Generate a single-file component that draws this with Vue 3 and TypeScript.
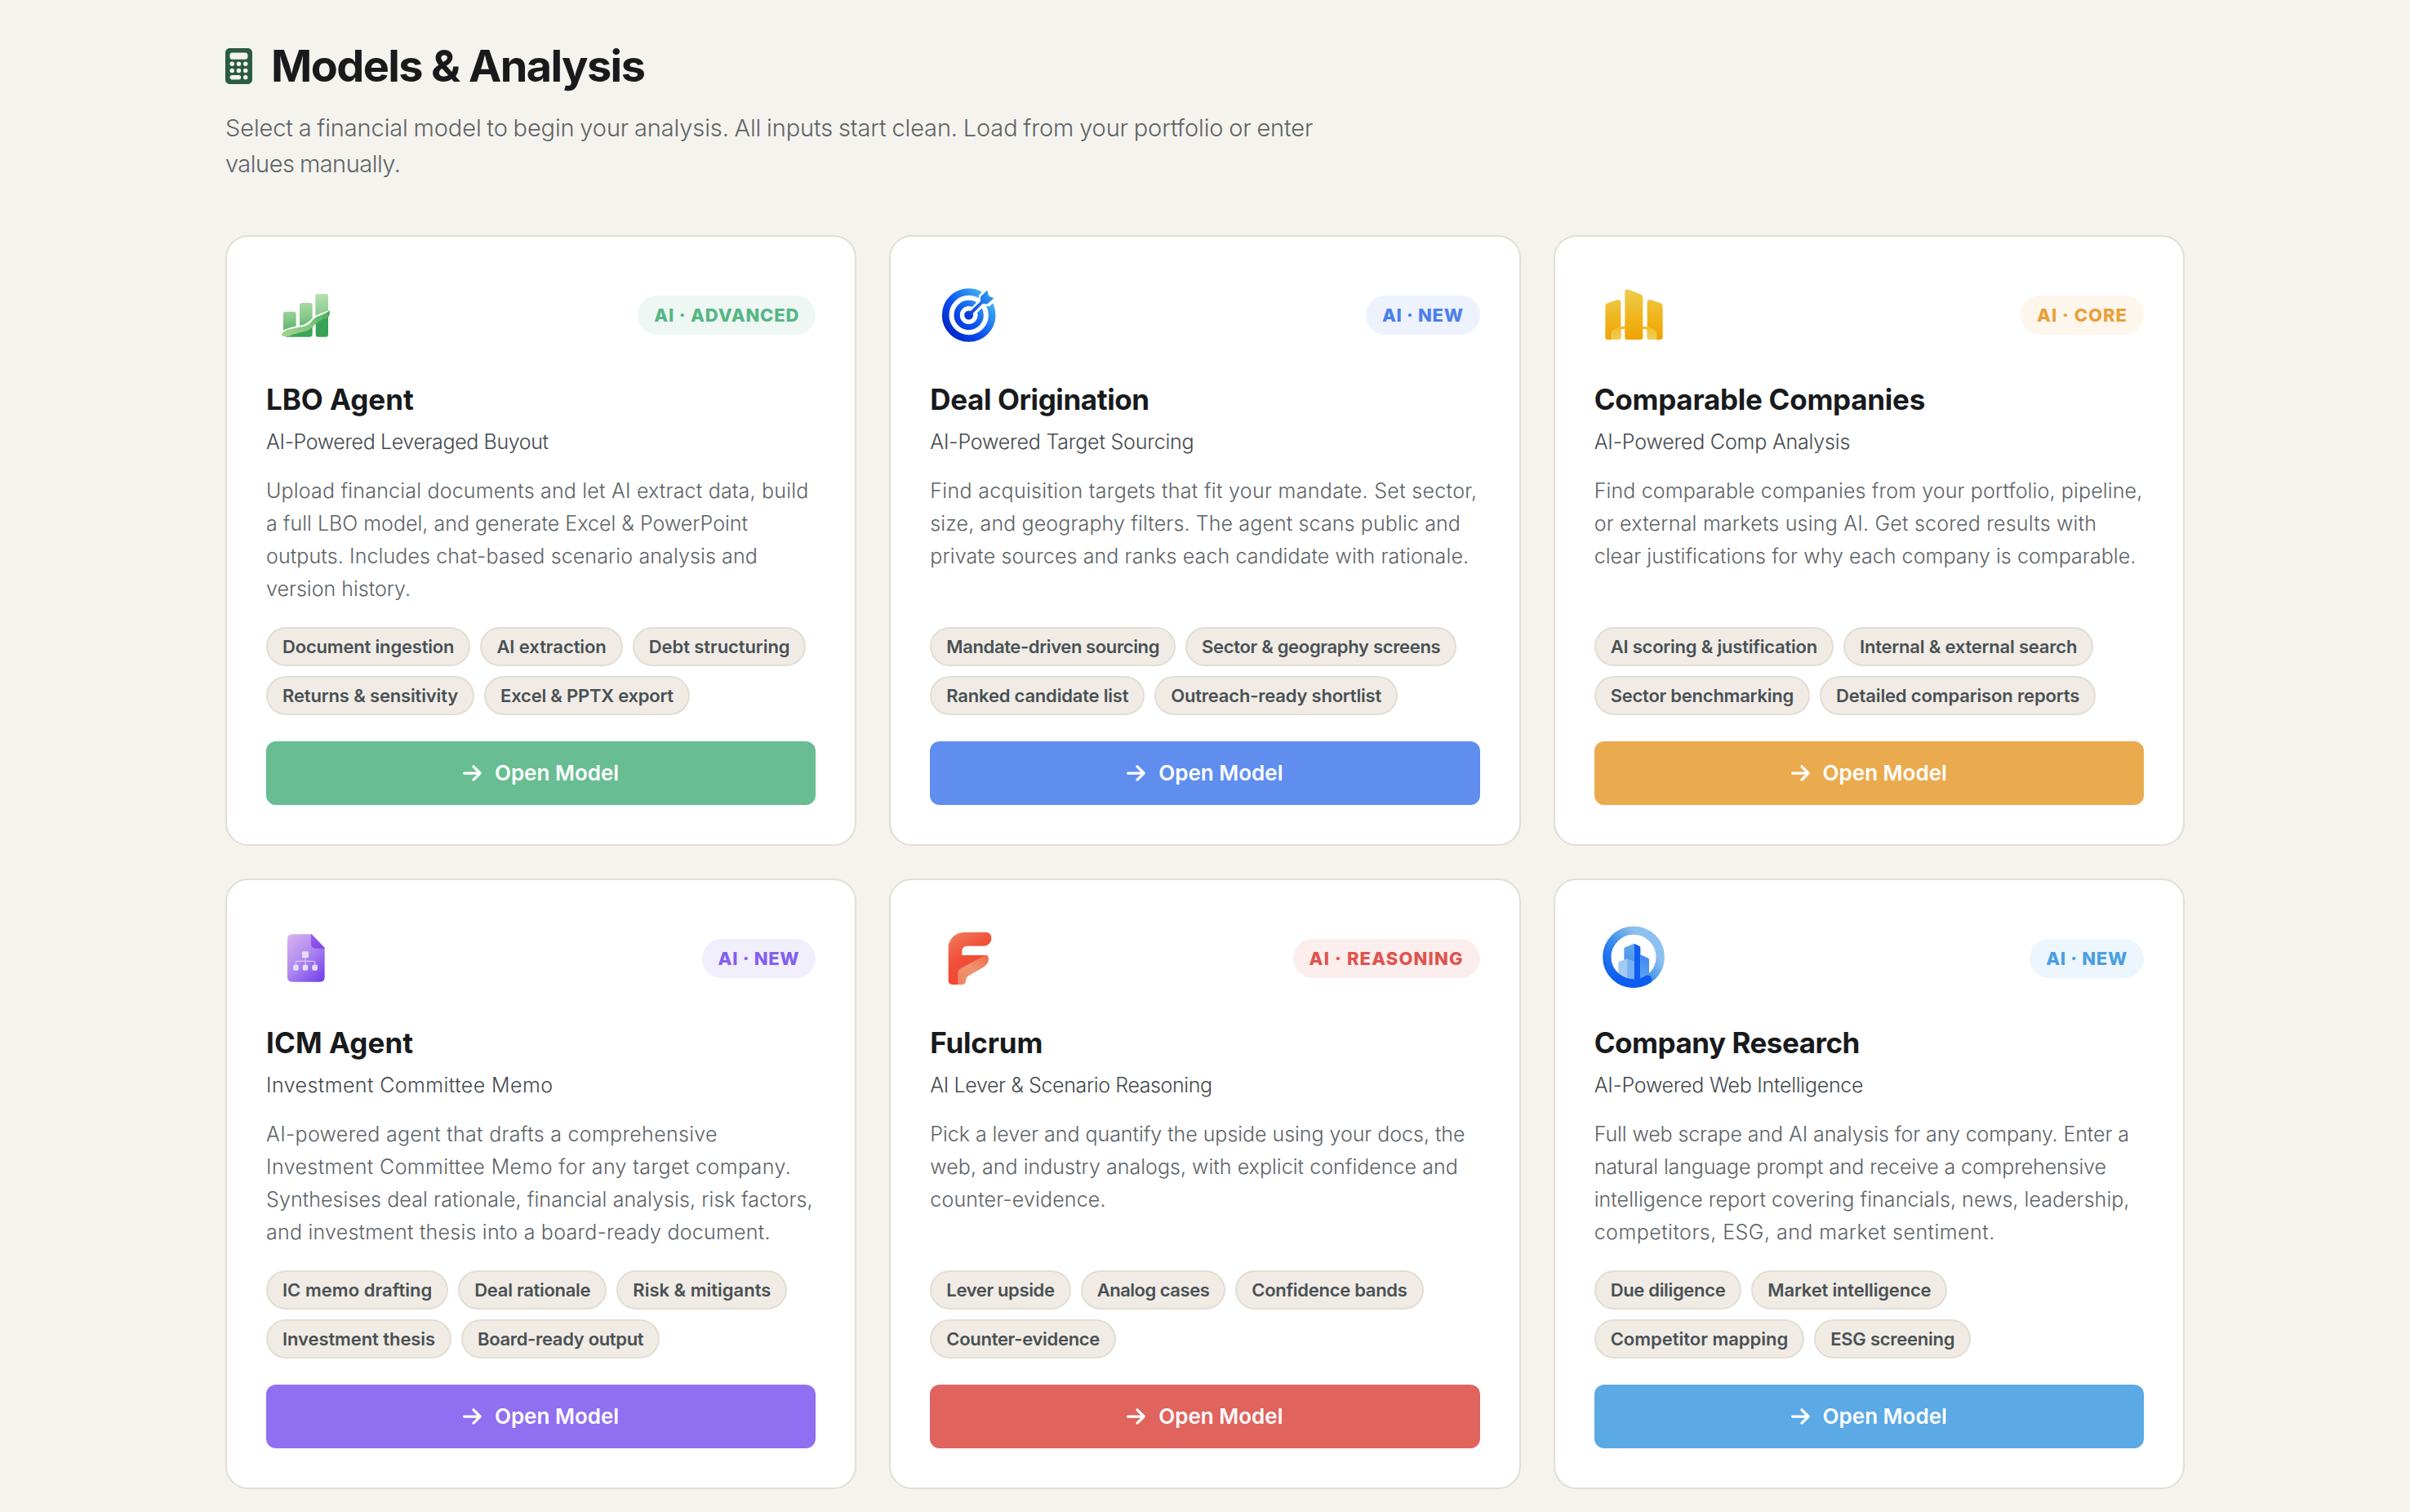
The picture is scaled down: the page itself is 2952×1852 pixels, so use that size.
<script setup lang="ts">
type Run = [text: string, tracking: number]

interface Model {
  id: string
  title: Run
  subtitle: Run
  badge: Run
  lines: Run[]
  tags: Run[]
}

const intro: Run[] = [
  ['Select a financial model to begin your analysis. All inputs start clean. Load from your portfolio or enter', -0.12],
  ['values manually.', -0.5],
]

const models: Model[] = [
  {
    id: 'lbo',
    title: ['LBO Agent', -0.05],
    subtitle: ['AI-Powered Leveraged Buyout', -0.38],
    badge: ['AI · ADVANCED', 0.85],
    lines: [
      ['Upload financial documents and let AI extract data, build', 0.19],
      ['a full LBO model, and generate Excel & PowerPoint', 0.01],
      ['outputs. Includes chat-based scenario analysis and', 0.11],
      ['version history.', 0],
    ],
    tags: [
      ['Document ingestion', -0.18],
      ['AI extraction', -0.06],
      ['Debt structuring', -0.08],
      ['Returns & sensitivity', -0.15],
      ['Excel & PPTX export', -0.22],
    ],
  },
  {
    id: 'deal',
    title: ['Deal Origination', -0.4],
    subtitle: ['AI-Powered Target Sourcing', -0.19],
    badge: ['AI · NEW', 0.7],
    lines: [
      ['Find acquisition targets that fit your mandate. Set sector,', 0.31],
      ['size, and geography filters. The agent scans public and', 0.12],
      ['private sources and ranks each candidate with rationale.', 0.1],
    ],
    tags: [
      ['Mandate-driven sourcing', -0.38],
      ['Sector & geography screens', -0.32],
      ['Ranked candidate list', -0.2],
      ['Outreach-ready shortlist', -0.2],
    ],
  },
  {
    id: 'comps',
    title: ['Comparable Companies', -0.26],
    subtitle: ['AI-Powered Comp Analysis', -0.18],
    badge: ['AI · CORE', 1],
    lines: [
      ['Find comparable companies from your portfolio, pipeline,', 0.13],
      ['or external markets using AI. Get scored results with', 0.21],
      ['clear justifications for why each company is comparable.', 0.06],
    ],
    tags: [
      ['AI scoring & justification', -0.21],
      ['Internal & external search', -0.2],
      ['Sector benchmarking', -0.24],
      ['Detailed comparison reports', -0.15],
    ],
  },
  {
    id: 'icm',
    title: ['ICM Agent', 0.08],
    subtitle: ['Investment Committee Memo', 0.42],
    badge: ['AI · NEW', 0.7],
    lines: [
      ['AI-powered agent that drafts a comprehensive', 0.3],
      ['Investment Committee Memo for any target company.', 0.4],
      ['Synthesises deal rationale, financial analysis, risk factors,', 0.09],
      ['and investment thesis into a board-ready document.', 0.23],
    ],
    tags: [
      ['IC memo drafting', 0.03],
      ['Deal rationale', -0.28],
      ['Risk & mitigants', 0],
      ['Investment thesis', -0.08],
      ['Board-ready output', -0.32],
    ],
  },
  {
    id: 'fulcrum',
    title: ['Fulcrum', -0.2],
    subtitle: ['AI Lever & Scenario Reasoning', -0.39],
    badge: ['AI · REASONING', 1.14],
    lines: [
      ['Pick a lever and quantify the upside using your docs, the', -0.04],
      ['web, and industry analogs, with explicit confidence and', 0.03],
      ['counter-evidence.', 0.15],
    ],
    tags: [
      ['Lever upside', -0.36],
      ['Analog cases', -0.48],
      ['Confidence bands', -0.29],
      ['Counter-evidence', -0.3],
    ],
  },
  {
    id: 'research',
    title: ['Company Research', -0.48],
    subtitle: ['AI-Powered Web Intelligence', -0.27],
    badge: ['AI · NEW', 0.7],
    lines: [
      ['Full web scrape and AI analysis for any company. Enter a', -0.11],
      ['natural language prompt and receive a comprehensive', -0.12],
      ['intelligence report covering financials, news, leadership,', 0.05],
      ['competitors, ESG, and market sentiment.', 0.47],
    ],
    tags: [
      ['Due diligence', -0.33],
      ['Market intelligence', -0.18],
      ['Competitor mapping', -0.01],
      ['ESG screening', -0.26],
    ],
  },
]

const track = (run: Run) => ({ letterSpacing: `${run[1]}px` })
</script>

<template>
  <main class="page">
    <header class="head">
      <h1 class="heading">
        <svg class="calc" viewBox="0 0 384 512">
          <path d="M64 0C28.7 0 0 28.7 0 64V448c0 35.3 28.7 64 64 64H320c35.3 0 64-28.7 64-64V64c0-35.3-28.7-64-64-64H64zM96 64H288c17.7 0 32 14.3 32 32v32c0 17.7-14.3 32-32 32H96c-17.7 0-32-14.3-32-32V96c0-17.7 14.3-32 32-32zm32 160a32 32 0 1 1-64 0 32 32 0 1 1 64 0zM96 352a32 32 0 1 1 0-64 32 32 0 1 1 0 64zM64 416c0-17.7 14.3-32 32-32h96c17.7 0 32 14.3 32 32s-14.3 32-32 32H96c-17.7 0-32-14.3-32-32zM192 256a32 32 0 1 1 0-64 32 32 0 1 1 0 64zm32 64a32 32 0 1 1-64 0 32 32 0 1 1 64 0zm64-64a32 32 0 1 1 0-64 32 32 0 1 1 0 64zm32 64a32 32 0 1 1-64 0 32 32 0 1 1 64 0zM288 448a32 32 0 1 1 0-64 32 32 0 1 1 0 64z" />
        </svg>
        <span>Models &amp; Analysis</span>
      </h1>
      <p class="intro">
        <span v-for="line in intro" :key="line[0]" class="line" :style="track(line)">{{ line[0] }}</span>
      </p>
    </header>

    <section class="grid">
      <article v-for="m in models" :key="m.id" class="card" :class="m.id">
        <div class="top">
          <svg v-if="m.id === 'lbo'" class="logo" viewBox="-12 -6 288 288">
            <defs>
              <linearGradient id="lboBar" gradientUnits="userSpaceOnUse" x1="120" y1="60" x2="135" y2="205">
                <stop offset="0" stop-color="#bfe2b6" />
                <stop offset="0.55" stop-color="#8acb8b" />
                <stop offset="1" stop-color="#45ac5e" />
              </linearGradient>
              <linearGradient id="lboBand" x1="0" y1="1" x2="1" y2="0">
                <stop offset="0" stop-color="#a2d58f" />
                <stop offset="0.5" stop-color="#83c77c" />
                <stop offset="1" stop-color="#3fa857" />
              </linearGradient>
              <clipPath id="lboUpper">
                <path d="M40 40H230V112C206 130 190 127 168 142C150 155 145 166 125 173C95 181 70 180 40 200Z" />
              </clipPath>
            </defs>
            <g fill="url(#lboBar)" clip-path="url(#lboUpper)">
              <rect x="51" y="125" width="47" height="95" rx="8" />
              <rect x="111" y="93" width="47" height="125" rx="8" />
              <rect x="169" y="60" width="47" height="158" rx="8" />
            </g>
            <path fill="#3ba558" d="M58 218C90 200 112 205 140 188L158 173V208Q158 218 148 218Z" />
            <path fill="#37a256" d="M170 166C185 152 200 148 216 140V209Q216 218 207 218H179Q170 218 170 209Z" />
            <path fill="url(#lboBand)" d="M46 208C55 188 100 186 133 178C160 165 155 150 185 140C200 135 210 130 221 121Q224 133 219 142C208 153 192 152 176 165C158 180 152 192 130 198C106 203 90 207 70 216L50 216Q44 214 46 208Z" />
          </svg>

          <svg v-else-if="m.id === 'deal'" class="logo" viewBox="28 -6 288 288">
            <defs>
              <linearGradient id="dealBlue" gradientUnits="userSpaceOnUse" x1="100" y1="205" x2="250" y2="65">
                <stop offset="0" stop-color="#0227c8" />
                <stop offset="0.4" stop-color="#0a50f2" />
                <stop offset="1" stop-color="#46bdf0" />
              </linearGradient>
              <linearGradient id="dealArrow" gradientUnits="userSpaceOnUse" x1="165" y1="145" x2="255" y2="60">
                <stop offset="0" stop-color="#0a35d8" />
                <stop offset="1" stop-color="#2f9df2" />
              </linearGradient>
            </defs>
            <g fill="none" stroke="url(#dealBlue)">
              <circle cx="171" cy="138" r="85.500" stroke-width="26" />
              <circle cx="171" cy="138" r="43.500" stroke-width="22" />
            </g>
            <path fill="#fff" d="M171 120L209 82L207 66L219 53L245 25L290 70L260 94L247 106L228 104L190 140Z" />
            <circle cx="171" cy="138" r="32" fill="#fff" />
            <circle cx="171" cy="138" r="16.500" fill="url(#dealArrow)" />
            <path d="M171 138L224 86" stroke="url(#dealArrow)" stroke-width="12" stroke-linecap="round" />
            <path fill="url(#dealArrow)" stroke="url(#dealArrow)" stroke-width="3" stroke-linejoin="round" d="M216 70L238 49L243 69L261 76L239 96L215 94Z" />
          </svg>

          <svg v-else-if="m.id === 'comps'" class="logo" viewBox="38 -6 288 288">
            <defs>
              <linearGradient id="gold" gradientUnits="userSpaceOnUse" x1="175" y1="55" x2="185" y2="225">
                <stop offset="0" stop-color="#eecb48" />
                <stop offset="0.55" stop-color="#efb51d" />
                <stop offset="1" stop-color="#f1a303" />
              </linearGradient>
              <linearGradient id="goldLight" x1="0" y1="0" x2="0" y2="1">
                <stop offset="0" stop-color="#f0bd2c" />
                <stop offset="1" stop-color="#efcd57" />
              </linearGradient>
            </defs>
            <path fill="none" stroke="#efbb2b" stroke-width="9" d="M130 188Q140 184 152 184M214 184Q226 184 236 188" />
            <g fill="url(#gold)">
              <path d="M78 106Q78 97 86 94L122 82Q135 79 135 91V218Q135 228 125 228H88Q78 228 78 218Z" />
              <path d="M150 54Q150 41 163 44L207 61Q216 65 216 74V218Q216 228 206 228H160Q150 228 150 218Z" />
              <path d="M289 106Q289 97 281 94L245 82Q232 79 232 91V218Q232 228 242 228H279Q289 228 289 218Z" />
            </g>
            <path fill="url(#goldLight)" d="M99 228V209C100 190 118 190 135 178V218Q135 228 125 228Z" />
            <path fill="url(#goldLight)" d="M267 228V209C266 190 249 190 232 178V218Q232 228 242 228Z" />
          </svg>

          <svg v-else-if="m.id === 'icm'" class="logo" viewBox="-12 3 288 288">
            <defs>
              <linearGradient id="docFill" x1="0.1" y1="0" x2="0.9" y2="1">
                <stop offset="0" stop-color="#d8aff0" />
                <stop offset="0.45" stop-color="#b18cf0" />
                <stop offset="1" stop-color="#7440ec" />
              </linearGradient>
              <linearGradient id="docFold" x1="0" y1="0" x2="1" y2="1">
                <stop offset="0" stop-color="#9a5fe6" />
                <stop offset="1" stop-color="#7a42ea" />
              </linearGradient>
            </defs>
            <path fill="url(#docFill)" d="M66 76Q66 58 84 58H155L203 108V216Q203 233 186 233H84Q66 233 66 216Z" />
            <path fill="url(#docFold)" d="M153 58H155L203 108V110H170Q153 110 153 93Z" />
            <g fill="none" stroke="#d9c8f6" stroke-width="3.500">
              <path d="M132 142V172M97 172V163Q97 157 103 157H161Q167 157 167 163V172" />
            </g>
            <g fill="#e6dcf5">
              <rect x="120" y="121" width="24" height="24" rx="5" />
              <rect x="87" y="170" width="20" height="21" rx="5" />
              <rect x="122" y="170" width="20" height="21" rx="5" />
              <rect x="157" y="170" width="20" height="21" rx="5" />
            </g>
          </svg>

          <svg v-else-if="m.id === 'fulcrum'" class="logo" viewBox="-2 3 288 288">
            <defs>
              <linearGradient id="fRed" gradientUnits="userSpaceOnUse" x1="80" y1="60" x2="150" y2="170">
                <stop offset="0" stop-color="#f07a5a" />
                <stop offset="0.6" stop-color="#f1533b" />
                <stop offset="1" stop-color="#f04a36" />
              </linearGradient>
              <linearGradient id="fLight" x1="0" y1="1" x2="1" y2="0">
                <stop offset="0" stop-color="#f0855f" />
                <stop offset="0.5" stop-color="#f09570" />
                <stop offset="1" stop-color="#ef6a4c" />
              </linearGradient>
            </defs>
            <path fill="url(#fRed)" d="M66 109C66 76 92 51 125 51H204Q224 52 224 72C224 90 212 101 195 101H136Q116 101 116 121V135H204Q214 137 213 149Q211 168 197 177L141 209Q130 215 130 226Q129 243 113 243H80Q66 242 66 228Z" />
            <path fill="url(#fLight)" d="M101 243V199Q101 189 112 183L200 136Q214 135 213 149Q211 168 197 177L141 209Q130 215 130 226Q129 243 113 243Z" />
          </svg>

          <svg v-else class="logo" viewBox="38 18 288 288">
            <defs>
              <linearGradient id="ring" gradientUnits="userSpaceOnUse" x1="110" y1="235" x2="260" y2="100">
                <stop offset="0" stop-color="#0f62ef" />
                <stop offset="0.45" stop-color="#3d8eec" />
                <stop offset="0.85" stop-color="#8cc0ee" />
                <stop offset="1" stop-color="#8cc0ee" />
              </linearGradient>
              <linearGradient id="ringEnd" gradientUnits="userSpaceOnUse" x1="85" y1="170" x2="150" y2="260">
                <stop offset="0" stop-color="#1f74ee" stop-opacity="0" />
                <stop offset="0.6" stop-color="#0f60f0" />
                <stop offset="1" stop-color="#0c5cf0" />
              </linearGradient>
              <linearGradient id="faceLeft" x1="0" y1="0" x2="0" y2="1">
                <stop offset="0" stop-color="#63a8ee" />
                <stop offset="1" stop-color="#2a7cec" />
              </linearGradient>
              <linearGradient id="faceSide" x1="0" y1="0" x2="0" y2="1">
                <stop offset="0" stop-color="#3a86ee" />
                <stop offset="1" stop-color="#64a8f0" />
              </linearGradient>
              <clipPath id="ringInner"><circle cx="182" cy="157" r="86" /></clipPath>
            </defs>
            <g clip-path="url(#ringInner)">
              <path fill="url(#faceSide)" d="M207 148L236 161Q239 163 239 167V250H207Z" />
              <path fill="url(#faceLeft)" d="M147 127Q147 123 151 121L184 107V250H147Z" />
              <path fill="#0f5cf0" d="M184 107L204 117Q207 119 207 123V250H184Z" />
              <path fill="#a3caf2" d="M126 179Q126 175 130 173L160 162V250H126Z" />
              <path fill="#78b2f0" d="M160 162L181 171Q184 173 184 177V250H160Z" />
            </g>
            <circle cx="182" cy="157" r="98" fill="none" stroke="url(#ring)" stroke-width="31" />
            <path d="M84 157A98 98 0 0 0 233 239" fill="none" stroke="url(#ringEnd)" stroke-width="31" stroke-linecap="round" />
          </svg>

          <span class="badge" :style="track(m.badge)">{{ m.badge[0] }}</span>
        </div>

        <h2 class="title" :style="track(m.title)">{{ m.title[0] }}</h2>
        <p class="subtitle" :style="track(m.subtitle)">{{ m.subtitle[0] }}</p>
        <p class="desc">
          <span v-for="line in m.lines" :key="line[0]" class="line" :style="track(line)">{{ line[0] }}</span>
        </p>
        <ul class="tags">
          <li v-for="tag in m.tags" :key="tag[0]" class="tag" :style="track(tag)">{{ tag[0] }}</li>
        </ul>
        <button class="open" type="button">
          <svg class="arrow" viewBox="0 0 448 512">
            <path d="M438.600 278.600c12.500-12.500 12.500-32.800 0-45.300l-160-160c-12.500-12.500-32.800-12.500-45.300 0s-12.500 32.800 0 45.300L338.800 224 32 224c-17.700 0-32 14.300-32 32s14.300 32 32 32l306.700 0L233.400 393.400c-12.500 12.500-12.500 32.800 0 45.300s32.800 12.500 45.300 0l160-160z" />
          </svg>
          <span>Open Model</span>
        </button>
      </article>
    </section>
  </main>
</template>

<style>
body {
  background: #f5f3ee;
}
</style>

<style scoped>
.page {
  box-sizing: border-box;
  width: 2400px;
  height: 1852px;
  margin: 0 auto;
  padding-top: 49px;
  overflow: hidden;
  font-family: Inter, 'Liberation Sans', sans-serif;
}

.heading {
  display: flex;
  align-items: center;
  gap: 23px;
  height: 64px;
  margin: 0;
  font-size: 54px;
  font-weight: 650;
  line-height: 64px;
  letter-spacing: -1.6px;
  color: #181a1c;
}

.calc {
  width: 33px;
  height: 44px;
  fill: #2a5c43;
}

.intro {
  margin: 22px 0 65px;
  font-size: 29px;
  font-weight: 300;
  line-height: 44px;
  word-spacing: -1.2px;
  color: #5d6367;
}

.line {
  display: block;
  white-space: nowrap;
}

.grid {
  display: grid;
  grid-template-columns: repeat(3, 1fr);
  gap: 40px;
}

.card {
  display: flex;
  flex-direction: column;
  box-sizing: border-box;
  min-width: 0;
  height: 748px;
  padding: 48px;
  border: 2px solid #e3ded4;
  border-radius: 28px;
  background: #fff;
}

.top {
  display: flex;
  align-items: center;
  justify-content: space-between;
  height: 96px;
}

.logo {
  width: 96px;
  height: 96px;
}

.badge {
  height: 48px;
  padding: 0 20px;
  border-radius: 24px;
  font-size: 22px;
  font-weight: 800;
  line-height: 48px;
  white-space: nowrap;
}

.title {
  margin: 33px 0 0;
  font-size: 35px;
  font-weight: 650;
  line-height: 44px;
  color: #181a1c;
}

.subtitle {
  margin: 14px 0 0;
  font-size: 25px;
  font-weight: 300;
  line-height: 32px;
  color: #43494d;
}

.desc {
  flex: 1;
  margin: 24px 0 27px;
  font-size: 25px;
  font-weight: 300;
  line-height: 40px;
  color: #5d6367;
}

.tags {
  display: flex;
  flex-wrap: wrap;
  gap: 12px;
  margin: 0 0 32px;
  padding: 0;
  list-style: none;
}

.tag {
  box-sizing: border-box;
  height: 48px;
  padding: 0 18px;
  border: 2px solid #e3ded3;
  border-radius: 24px;
  background: #f0ece5;
  font-size: 22px;
  font-weight: 600;
  line-height: 44px;
  white-space: nowrap;
  color: #4a5054;
}

.open {
  display: flex;
  align-items: center;
  justify-content: center;
  gap: 16px;
  flex: none;
  height: 78px;
  padding: 0;
  border: 0;
  border-radius: 12px;
  font-family: inherit;
  font-size: 26px;
  font-weight: 600;
  line-height: 32px;
  color: #fff;
}

.arrow {
  width: 22.75px;
  height: 26px;
  fill: #fff;
}

.lbo .badge { background: #eef7f3; color: #56b685; }
.lbo .open { background: #68bd93; }
.deal .badge { background: #edf2fd; color: #4c7feb; }
.deal .open { background: #608eee; }
.comps .badge { background: #fdf6ec; color: #e8a13b; }
.comps .open { background: #eaab4f; }
.icm .badge { background: #f2effd; color: #8460ee; }
.icm .open { background: #906ff0; }
.fulcrum .badge { background: #fceeed; color: #df544e; }
.fulcrum .open { background: #e0635e; }
.research .badge { background: #edf6fc; color: #4a9fe2; }
.research .open { background: #5ba9e5; }
</style>
